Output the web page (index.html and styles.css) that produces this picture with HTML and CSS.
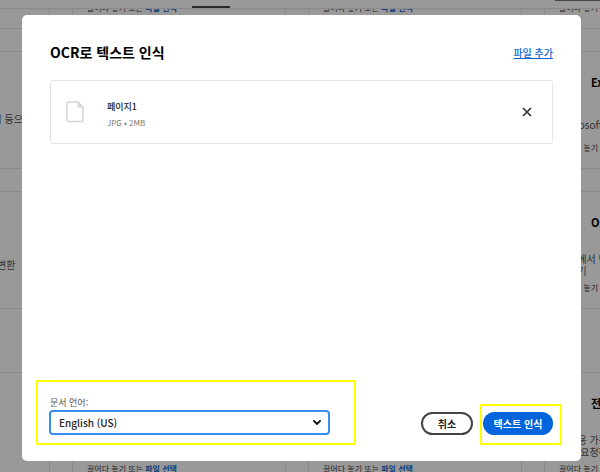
FILE: index.html
```
<!DOCTYPE html>
<html lang="ko">
<head>
    <meta charset="UTF-8">
    <meta name="viewport" content="width=device-width, initial-scale=1.0">
    <title>OCR로 텍스트 인식</title>
    <link rel="stylesheet" href="styles.css">
</head>

<body>

<!-- Tools page behind the dialog -->
<div class="page" inert>
    <header class="tabs">
        <span class="tab-active"></span>
        <span class="tab-box"></span>
    </header>

    <main>
        <section class="tools">
            <article class="card"></article>
            <article class="card"><h2></h2><p></p><div class="drop">끌어다 놓기 또는 <a href="#">파일 선택</a></div></article>
            <article class="card"><h2></h2><p></p><div class="drop">끌어다 놓기 또는 <a href="#">파일 선택</a></div></article>
            <article class="card"><h2></h2><p></p><div class="drop">끌어다 놓기 또는 <a href="#">파일 선택</a></div></article>

            <article class="card"><h2></h2><p>Word, Excel, PPT 문서 또는 이미지 등으로<br>변환합니다.</p></article>
            <article class="card"></article>
            <article class="card"></article>
            <article class="card"><h2>Excel로 변환</h2><p>Microsoft Excel로 변환</p><div class="drop">끌어다 놓기 또는 <a href="#">파일 선택</a></div></article>

            <article class="card"><h2></h2><p>PDF를 JPG, PNG, TIFF 등 파일로 변환</p></article>
            <article class="card"></article>
            <article class="card"></article>
            <article class="card"><h2>OCR로 텍스트 인식</h2><p>문서에서 텍스트<br>만들기</p><div class="drop">끌어다 놓기 또는 <a href="#">파일 선택</a></div></article>
        </section>

        <section class="tools tools-next">
            <article class="card"></article>
            <article class="card"><h2></h2><p></p><div class="drop">끌어다 놓기 또는 <a href="#">파일 선택</a></div></article>
            <article class="card"><h2></h2><p></p><div class="drop">끌어다 놓기 또는 <a href="#">파일 선택</a></div></article>
            <article class="card"><h2>전자 서명 요청</h2><p>작성용 가능한 양식<br>서명 요청하기</p><div class="drop">끌어다 놓기 또는 <a href="#">파일 선택</a></div></article>
        </section>
    </main>
</div>

<!-- Dialog -->
<div class="overlay">
    <div class="dialog" role="dialog" aria-labelledby="dialog-title">
        <div class="dialog-header">
            <h1 id="dialog-title">OCR로 텍스트 인식</h1>
            <a href="#">파일 추가</a>
        </div>

        <div class="file">
            <svg class="file-icon" width="18" height="22" viewBox="0 0 18 22" fill="none" stroke="#d4d4d4" stroke-width="1.5">
                <path d="M3 1H12l5 5v12.500a2 2 0 0 1-2 2H3a2 2 0 0 1-2-2V3a2 2 0 0 1 2-2z"/>
                <path d="M12 1v5h5z" fill="#dcdcdc" stroke-width="1"/>
            </svg>
            <div class="file-info">
                <div class="file-name">페이지1</div>
                <div class="file-meta">JPG • 2MB</div>
            </div>
            <button class="remove-btn" aria-label="삭제">
                <svg width="10" height="10" viewBox="0 0 10 10" stroke="#333" stroke-width="1.700"><path d="M1 1l8 8M9 1l-8 8"/></svg>
            </button>
        </div>

        <div class="dialog-footer">
            <div class="highlight language">
                <label for="language">문서 언어:</label>
                <div class="select-wrap">
                    <select id="language">
                        <option>English (US)</option>
                        <option>한국어</option>
                    </select>
                    <svg width="8" height="6" viewBox="0 0 8 6" fill="none" stroke="#111" stroke-width="1.800"><path d="M1 1l3 3 3-3" stroke-linecap="round"/></svg>
                </div>
            </div>
            <button class="btn cancel-btn">취소</button>
            <div class="highlight submit">
                <button class="btn submit-btn">텍스트 인식</button>
            </div>
        </div>
    </div>
</div>

</body>
</html>
```

FILE: styles.css
```
* {
    box-sizing: border-box;
}
body {
    font-family: "Noto Sans CJK KR", sans-serif;
    margin: 0;
    color: #222;
    background-color: #fff;
}
h1, h2, p {
    margin: 0;
}
button, select {
    font-family: inherit;
    cursor: pointer;
}

/* Page behind */
.page {
    height: 100vh;
    overflow: hidden;
}
.tabs {
    position: relative;
    z-index: 1;
    display: flex;
    justify-content: space-between;
    height: 9px;
    padding-left: 192px;
    background-color: #fff;
    border-bottom: 1px solid #e6e6e6;
}
.tab-active {
    width: 38px;
    height: 8px;
    border-bottom: 2px solid #444;
}
.tab-box {
    width: 45px;
    height: 1px;
    background-color: #777;
}
.tools {
    display: grid;
    grid-template-columns: repeat(4, 214px);
    justify-content: center;
    gap: 22px;
    padding-right: 6px;
    margin-top: -98px;
}
.tools-next {
    margin-top: 63px;
}
.card {
    height: 118px;
    padding: 22px 14px 0;
    border: 1px solid #e6e6e6;
    white-space: nowrap;
}
.card h2 {
    height: 16px;
    padding-left: 32px;
    font-size: 11px;
    line-height: 16px;
    color: #000;
}
.card p {
    display: grid;
    align-content: center;
    height: 24px;
    margin: 23px 0 5px;
    font-size: 10px;
    line-height: 12px;
    color: #505050;
}
.drop {
    font-size: 8px;
    line-height: 12px;
    color: #404040;
}
.drop a {
    color: #0d66d0;
    font-weight: bold;
    text-decoration: none;
}

/* Dialog */
.overlay {
    position: fixed;
    inset: 0;
    z-index: 2;
    display: flex;
    padding: 15px 19px 11px 22px;
    background-color: rgba(0, 0, 0, 0.4);
}
.dialog {
    flex: 1;
    display: flex;
    flex-direction: column;
    padding: 27px 19px 16px 14px;
    background-color: #fff;
    border-radius: 5px;
}
.dialog-header {
    display: flex;
    justify-content: space-between;
    align-items: center;
    height: 20px;
    margin: 0 9px 18px 14px;
}
.dialog-header h1 {
    font-size: 14px;
    color: #000;
}
.dialog-header a {
    font-size: 10px;
    font-weight: 500;
    color: #0d66d0;
}
.file {
    display: flex;
    align-items: center;
    height: 64px;
    margin: 0 9px 0 14px;
    padding: 0 20px 0 15px;
    border: 1px solid #e4e4e4;
    border-radius: 3px;
}
.file-info {
    flex: 1;
    margin-left: 23px;
    padding-top: 6px;
    line-height: 16px;
}
.file-name {
    font-size: 9px;
    font-weight: 500;
}
.file-meta {
    font-size: 8px;
    color: #777;
}
.remove-btn {
    display: flex;
    padding: 0;
    border: none;
    background: none;
}
.dialog-footer {
    display: flex;
    align-items: flex-end;
    margin-top: auto;
}
.highlight {
    border: 2px solid #ff0;
}
.language {
    width: 320px;
    padding: 13px 24px 8px 11px;
}
.language label {
    display: block;
    padding-left: 1px;
    font-size: 9px;
    line-height: 15px;
    color: #555;
}
.select-wrap {
    display: grid;
    align-items: center;
}
.select-wrap select, .select-wrap svg {
    grid-area: 1 / 1;
}
.select-wrap svg {
    justify-self: end;
    margin-right: 9px;
    pointer-events: none;
}
select {
    appearance: none;
    width: 100%;
    height: 25px;
    padding: 0 8px;
    border: 2px solid #378ef0;
    border-radius: 4px;
    background-color: #fff;
    color: #222;
    font-size: 10px;
    font-weight: 500;
}
.btn {
    height: 23px;
    padding: 0;
    border-radius: 12px;
    font-size: 10px;
    font-weight: bold;
    line-height: 1;
}
.cancel-btn {
    width: 52px;
    margin: 0 7px 10px auto;
    border: 2px solid #444;
    background-color: #fff;
    color: #222;
}
.submit {
    padding: 6px 7px 8px 1px;
}
.submit-btn {
    display: block;
    width: 70px;
    border: none;
    background-color: #0265dc;
    color: #fff;
}
```
